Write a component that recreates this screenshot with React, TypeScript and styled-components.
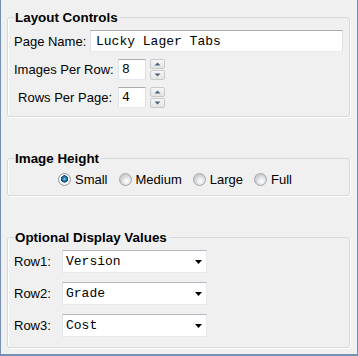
import styled, { createGlobalStyle } from "styled-components";

const Global = createGlobalStyle`
  body {
    margin: 0;
    background: #ffffff;
  }
`;

const Window = styled.div`
  box-sizing: border-box;
  width: 358px;
  height: 356px;
  background: #f0f0f0;
  border: 1px solid #7590b5;
  border-top: none;
  border-bottom-width: 2px;
  padding: 10px 7px 0 6px;
  display: flex;
  flex-direction: column;
  gap: 34px;
  font: 13px "Liberation Sans", Arial, sans-serif;
  color: #000;
`;

const Group = styled.fieldset<{ $pad: string; $gap: number }>`
  margin: 0;
  min-width: 0;
  padding: ${(p) => p.$pad};
  border: 1px solid #d5d9dd;
  border-radius: 3px;
  box-shadow: inset 1px 0 0 #fff, 1px 1px 0 #fff;
  display: flex;
  flex-direction: column;
  gap: ${(p) => p.$gap}px;
`;

const Title = styled.legend`
  padding: 0 2px 0 1px;
  font-weight: bold;
  font-size: 13.4px;
  line-height: 15px;
`;

const Row = styled.div<{ $h?: number }>`
  display: flex;
  align-items: center;
  height: ${(p) => p.$h ?? 22}px;
`;

const Label = styled.span<{ $w: number; $right?: boolean }>`
  width: ${(p) => p.$w}px;
  flex: none;
  text-align: ${(p) => (p.$right ? "right" : "left")};
  white-space: nowrap;
`;

const TextBox = styled.input<{ $w?: number; $ml: number }>`
  box-sizing: border-box;
  height: ${(p) => (p.$w ? 21 : 22)}px;
  margin-left: ${(p) => p.$ml}px;
  ${(p) => (p.$w ? `width: ${p.$w}px; padding: 0 3px;` : "flex: 1; padding: 0 5px;")}
  min-width: 0;
  background: #fff;
  border: 1px solid #e3e9ef;
  border-top-color: #abadb3;
  border-left-color: #e2e3ea;
  border-right-color: #dbdfe6;
  font: 13px "Liberation Mono", "Courier New", monospace;
  color: #000;
  outline: none;
`;

const Spinner = styled.div`
  margin-left: 4px;
  width: 15px;
  height: 21px;
  display: flex;
  flex-direction: column;
  gap: 1px;
`;

const SpinButton = styled.div`
  flex: 1;
  box-sizing: border-box;
  border: 1px solid #c6cace;
  border-radius: 2px;
  background: linear-gradient(#f6f6f6, #e4e4e4);
  display: flex;
  align-items: center;
  justify-content: center;
`;

const RadioRow = styled.div`
  display: flex;
  align-items: center;
  height: 15px;
  padding-left: 44px;
  gap: 11px;
`;

const Option = styled.label`
  display: flex;
  align-items: center;
  gap: 4px;
`;

const Dot = styled.span<{ $on?: boolean }>`
  box-sizing: border-box;
  width: 13px;
  height: 13px;
  border-radius: 50%;
  border: 1px solid ${(p) => (p.$on ? "#8a98a6" : "#a2a6ab")};
  background: ${(p) =>
    p.$on
      ? "radial-gradient(circle at 50% 45%, #8fd0f0 0, #2b86b8 1.6px, #10456c 3.4px, #ffffff 3.9px, #eef0f2 5px)"
      : "radial-gradient(circle at 60% 65%, #ffffff 0, #f2f2f2 2px, #cdd0d3 6px)"};
`;

const Combo = styled.div`
  box-sizing: border-box;
  width: 145px;
  height: 23px;
  display: flex;
  align-items: center;
  justify-content: space-between;
  padding: 0 1px 0 3px;
  background: #fff;
  border: 1px solid #e3e9ef;
  border-top-color: #b6b8bd;
  border-left-color: #e2e3ea;
  font: 13px "Liberation Mono", "Courier New", monospace;
`;

const Arrow = () => (
  <svg width="12" height="10" viewBox="0 0 12 10">
    <polygon points="2,3 9,3 5.5,7" fill="#000" />
  </svg>
);

const SmallArrow = ({ up }: { up?: boolean }) => (
  <svg width="7" height="4" viewBox="0 0 7 4">
    <polygon points={up ? "0.5,3.5 6.5,3.5 3.5,0.5" : "0.5,0.5 6.5,0.5 3.5,3.5"} fill="#4d6185" />
  </svg>
);

const sizes = ["Small", "Medium", "Large", "Full"];
const rows = [
  ["Row1:", "Version"],
  ["Row2:", "Grade"],
  ["Row3:", "Cost"],
];

export default function App() {
  return (
    <Window>
      <Global />
      <Group $pad="5px 6px 8px" $gap={6}>
        <Title>Layout Controls</Title>
        <Row>
          <Label $w={76}>Page Name:</Label>
          <TextBox $ml={0} readOnly value="Lucky Lager Tabs" />
        </Row>
        {[
          ["Images Per Row:", "8"],
          ["Rows Per Page:", "4"],
        ].map(([label, value]) => (
          <Row key={label}>
            <Label $w={98} $right>
              {label}
            </Label>
            <TextBox $ml={6} $w={28} readOnly value={value} />
            <Spinner>
              <SpinButton>
                <SmallArrow up />
              </SpinButton>
              <SpinButton>
                <SmallArrow />
              </SpinButton>
            </Spinner>
          </Row>
        ))}
      </Group>

      <Group $pad="6px 6px 8px" $gap={6}>
        <Title>Image Height</Title>
        <RadioRow>
          {sizes.map((s, i) => (
            <Option key={s}>
              <Dot $on={i === 0} />
              {s}
            </Option>
          ))}
        </RadioRow>
      </Group>

      <Group $pad="5px 6px 10px" $gap={9}>
        <Title>Optional Display Values</Title>
        {rows.map(([label, value]) => (
          <Row key={label} $h={23}>
            <Label $w={48}>{label}</Label>
            <Combo>
              <span>{value}</span>
              <Arrow />
            </Combo>
          </Row>
        ))}
      </Group>
    </Window>
  );
}
